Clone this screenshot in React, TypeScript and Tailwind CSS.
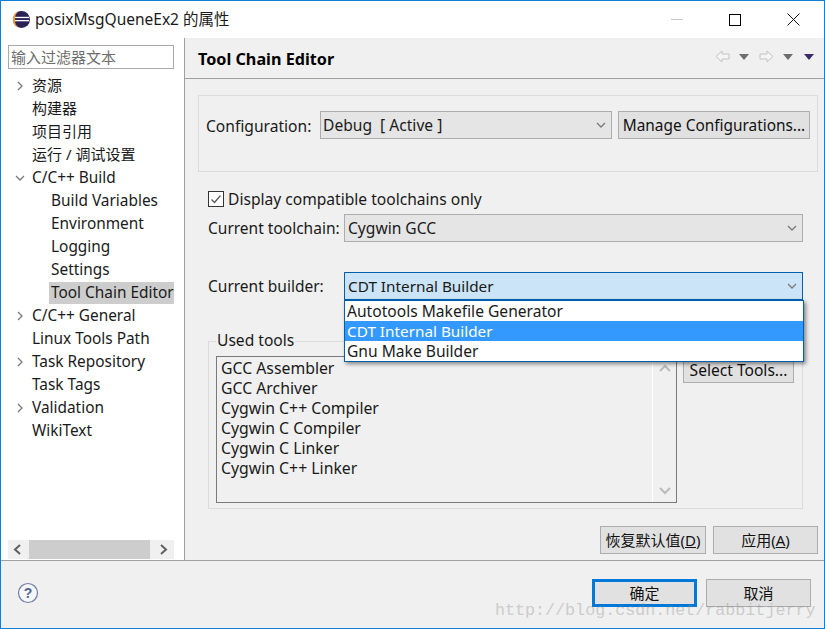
import React from "react";

const FONT = "font-['Noto_Sans','Noto_Sans_CJK_SC',sans-serif]";

function Chevron({ down, className = "" }: { down?: boolean; className?: string }) {
  return (
    <svg width="10" height="10" viewBox="0 0 10 10" className={className} fill="none" stroke="#7a7a7a" strokeWidth="1.3">
      {down ? <path d="M1 3 L5 7 L9 3" /> : <path d="M3 1 L7 5 L3 9" />}
    </svg>
  );
}

function EclipseLogo() {
  return (
    <svg width="19" height="19" viewBox="0 0 19 19">
      <circle cx="9.5" cy="9.5" r="8.5" fill="#2c2255" />
      <path d="M6 1.7 A8.5 8.5 0 0 0 6 17.3 A10 10 0 0 1 3 9.5 A10 10 0 0 1 6 1.7Z" fill="#f19a2a" />
      <rect x="3" y="6.8" width="14" height="1.3" fill="#fff" />
      <rect x="3" y="10" width="14" height="1.3" fill="#fff" />
    </svg>
  );
}

function ArrowGlyph({ flip }: { flip?: boolean }) {
  return (
    <svg width="15" height="13" viewBox="0 0 15 13" fill="#f4f4f4" stroke="#c4c4c4" style={flip ? { transform: "scaleX(-1)" } : undefined}>
      <path d="M1 6.5 L7 1 V4 H14 V9 H7 V12 Z" />
    </svg>
  );
}

function Caret({ color = "#6d6d6d" }: { color?: string }) {
  return (
    <svg width="10" height="6" viewBox="0 0 10 6">
      <path d="M0 0 H10 L5 6 Z" fill={color} />
    </svg>
  );
}

const treeRows: { label: string; indent: number; arrow?: "right" | "down"; selected?: boolean; cjk?: boolean }[] = [
  { label: "资源", indent: 0, arrow: "right", cjk: true },
  { label: "构建器", indent: 0, cjk: true },
  { label: "项目引用", indent: 0, cjk: true },
  { label: "运行 / 调试设置", indent: 0, cjk: true },
  { label: "C/C++ Build", indent: 0, arrow: "down" },
  { label: "Build Variables", indent: 1 },
  { label: "Environment", indent: 1 },
  { label: "Logging", indent: 1 },
  { label: "Settings", indent: 1 },
  { label: "Tool Chain Editor", indent: 1, selected: true },
  { label: "C/C++ General", indent: 0, arrow: "right" },
  { label: "Linux Tools Path", indent: 0 },
  { label: "Task Repository", indent: 0, arrow: "right" },
  { label: "Task Tags", indent: 0 },
  { label: "Validation", indent: 0, arrow: "right" },
  { label: "WikiText", indent: 0 },
];

const tools = ["GCC Assembler", "GCC Archiver", "Cygwin C++ Compiler", "Cygwin C Compiler", "Cygwin C Linker", "Cygwin C++ Linker"];

function Btn({ children, className = "" }: { children: React.ReactNode; className?: string }) {
  return (
    <div className={`flex items-center justify-center bg-[#e1e1e1] leading-none text-[#111] ${className}`}>
      {children}
    </div>
  );
}

const plain = "border border-[#adadad]";

export default function App() {
  return (
    <div className={`relative flex h-[629px] w-[825px] flex-col overflow-hidden border border-[#0f7fd8] bg-[#f0f0f0] text-[15.6px] text-[#1a1a1a] ${FONT}`}>
      {/* Title bar */}
      <div className="flex h-[37px] shrink-0 items-center bg-white">
        <div className="ml-[11px] flex h-[19px] w-[19px]"><EclipseLogo /></div>
        <span className="ml-[4px] pt-px text-[15.5px]">posixMsgQueneEx2 的属性</span>
        <div className="ml-auto flex items-center">
          <div className="mr-[46px] h-px w-[12px] bg-[#c8c8c8]" />
          <div className="mr-[46px] h-[12px] w-[12px] border border-black" />
          <svg width="13" height="13" viewBox="0 0 13 13" className="mr-[24px]" stroke="#111" strokeWidth="1">
            <path d="M0.5 0.5 L12.5 12.5 M12.5 0.5 L0.5 12.5" />
          </svg>
        </div>
      </div>

      <div className="flex h-[522px] shrink-0">
        {/* Preference tree */}
        <div className="flex w-[184px] shrink-0 flex-col border-r border-[#a0a0a0] bg-white">
          <div className="ml-[7px] mt-[7px] flex h-[24px] w-[166px] items-center border border-[#a9a9a9] px-[2px] text-[15px] text-[#6d6d6d]">
            输入过滤器文本
          </div>
          <div className="mt-[5px] flex-1 overflow-hidden">
            {treeRows.map((r) => (
              <div key={r.label} className={`relative ml-[7px] flex h-[23px] w-[166px] items-center overflow-hidden whitespace-nowrap ${r.cjk ? "text-[15px]" : "text-[15.4px]"}`}>
                {r.arrow && (
                  <Chevron down={r.arrow === "down"} className="absolute left-[7px] top-[7px]" />
                )}
                <span className={`${r.indent ? "ml-[41px] shrink-0 pl-[2px]" : "ml-[24px]"} ${r.selected ? "flex h-[22px] w-[125px] items-center bg-[#cdcdcd]" : ""}`}>
                  {r.label}
                </span>
              </div>
            ))}
          </div>
          <div className="mb-px ml-[7px] flex h-[19px] w-[166px] items-center bg-[#f0f0f0]">
            <svg width="21" height="19" viewBox="0 0 21 19" fill="none" stroke="#606060" strokeWidth="2"><path d="M12 5 L7 9.5 L12 14" /></svg>
            <div className="h-[19px] w-[121px] bg-[#cdcdcd]" />
            <svg width="24" height="19" viewBox="0 0 24 19" fill="none" stroke="#606060" strokeWidth="2"><path d="M11 5 L16 9.5 L11 14" /></svg>
          </div>
        </div>

        {/* Property page */}
        <div className="flex flex-1 flex-col">
          <div className="flex h-[41px] shrink-0 items-center border-b border-[#a0a0a0] pl-[13px] pr-[10px]">
            <span className="pt-[2px] text-[16.2px] font-bold text-black">Tool Chain Editor</span>
            <div className="mb-[3px] ml-auto flex items-center">
              <ArrowGlyph />
              <div className="ml-[9px]"><Caret /></div>
              <div className="ml-[10px]"><ArrowGlyph flip /></div>
              <div className="ml-[9px]"><Caret /></div>
              <div className="ml-[11px]"><Caret color="#3c2a6a" /></div>
            </div>
          </div>

          <div className="pl-[13px] pr-[6px] pt-[16px]">
            {/* Configuration */}
            <div className="flex h-[77px] items-start border border-[#dcdcdc] pl-[7px] pr-[7px] pt-[15px]">
              <span className="mt-[4px] w-[114px] shrink-0">Configuration:</span>
              <div className="flex h-[28px] w-[292px] items-center justify-between border border-[#adadad] bg-[#e5e5e5] pl-[2px] pr-[5px]">
                <span className="pt-px">Debug&nbsp; [ Active ]</span>
                <Chevron down />
              </div>
              <Btn className={`${plain} ml-[6px] h-[28px] w-[192px] pt-[2px] text-[15.4px]`}>Manage Configurations...</Btn>
            </div>

            {/* Toolchain options */}
            <div className="ml-[10px] mt-[17px] flex h-[20px] items-center">
              <div className="flex h-[16px] w-[16px] items-center justify-center border border-[#333] bg-white">
                <svg width="12" height="12" viewBox="0 0 12 12" fill="none" stroke="#555" strokeWidth="1.2"><path d="M1.5 6.5 L4.5 9.5 L10.5 2.5" /></svg>
              </div>
              <span className="ml-[4px] pt-[2px]">Display compatible toolchains only</span>
            </div>
            <div className="ml-[10px] mt-[5px] flex h-[28px] items-center">
              <span className="w-[136px] shrink-0 pt-px text-[15.5px]">Current toolchain:</span>
              <div className="flex h-[28px] w-[459px] items-center justify-between border border-[#adadad] bg-[#e5e5e5] pl-[3px] pr-[5px]">
                <span className="pt-px">Cygwin GCC</span>
                <Chevron down />
              </div>
            </div>
            <div className="ml-[10px] mt-[30px] flex h-[28px] items-center">
              <span className="w-[136px] shrink-0 pt-px text-[15.5px]">Current builder:</span>
              <div className="flex h-[28px] w-[459px] items-center justify-between border border-[#0060b0] bg-[#cce4f7] pl-[3px] pr-[5px]">
                <span className="pt-px text-[15.3px]">CDT Internal Builder</span>
                <Chevron down />
              </div>
            </div>

            {/* Used tools group */}
            <div className="relative ml-[10px] mt-[41px] flex h-[168px] w-[595px] items-start border border-[#dcdcdc] pl-[7px] pt-[14px]">
              <span className="absolute left-[7px] top-[-13px] bg-[#f0f0f0] px-px">Used tools</span>
              <div className="flex h-[147px] w-[461px] justify-between border border-[#7a7a7a] bg-[#f0f0f0] pl-[4px]">
                <div className="pt-px">
                  {tools.map((t) => (
                    <div key={t} className="h-[20px] text-[15.8px] leading-[20px]">{t}</div>
                  ))}
                </div>
                <div className="flex w-[24px] flex-col items-center justify-between border-l border-white pb-[7px] pt-[7px]">
                  <svg width="12" height="8" viewBox="0 0 12 8" fill="none" stroke="#bbb" strokeWidth="2"><path d="M1 7 L6 2 L11 7" /></svg>
                  <svg width="12" height="8" viewBox="0 0 12 8" fill="none" stroke="#bbb" strokeWidth="2"><path d="M1 1 L6 6 L11 1" /></svg>
                </div>
              </div>
              <Btn className={`${plain} ml-[6px] mt-px h-[26px] w-[111px] pt-px`}>Select Tools...</Btn>
            </div>

            {/* Defaults / apply */}
            <div className="mt-[17px] flex justify-end gap-[7px] text-[15px]">
              <Btn className={`${plain} h-[28px] w-[106px]`}><span>恢复默认值(<u>D</u>)</span></Btn>
              <Btn className={`${plain} h-[28px] w-[105px]`}><span>应用(<u>A</u>)</span></Btn>
            </div>
          </div>
        </div>
      </div>

      {/* Dialog footer */}
      <div className="flex flex-1 items-center border-t border-[#a0a0a0] pb-[3px] text-[15px]">
        <svg width="22" height="22" viewBox="0 0 22 22" className="ml-[16px]">
          <circle cx="11" cy="11" r="9.5" fill="#f4f6fa" stroke="#6d7fa5" strokeWidth="1.2" />
          <text x="11" y="16" textAnchor="middle" fontSize="14" fontWeight="700" fill="#50648f" fontFamily="Liberation Sans">?</text>
        </svg>
        <div className="ml-auto flex gap-[9px] pr-[13px]">
          <Btn className="h-[28px] w-[105px] border-[3px] border-[#0078d7]">确定</Btn>
          <Btn className={`${plain} h-[28px] w-[105px]`}>取消</Btn>
        </div>
      </div>

      {/* Open builder list */}
      <div className="absolute left-[343px] top-[299px] w-[460px] border border-[#0060b0] bg-white shadow-[2px_2px_4px_rgba(0,0,0,0.45)]">
        <div className="h-[20px] pl-[2px] leading-[20px]">Autotools Makefile Generator</div>
        <div className="h-[20px] bg-[#3399ff] pl-[2px] leading-[20px] text-[15.3px] text-white">CDT Internal Builder</div>
        <div className="h-[20px] pl-[2px] leading-[20px]">Gnu Make Builder</div>
      </div>

      {/* Source stamp */}
      <div className="absolute left-[494px] top-[597px] font-['Liberation_Mono',monospace] text-[16.7px] text-[#8a8a8a] opacity-35">
        http://blog.csdn.net/rabbitjerry
      </div>
    </div>
  );
}
